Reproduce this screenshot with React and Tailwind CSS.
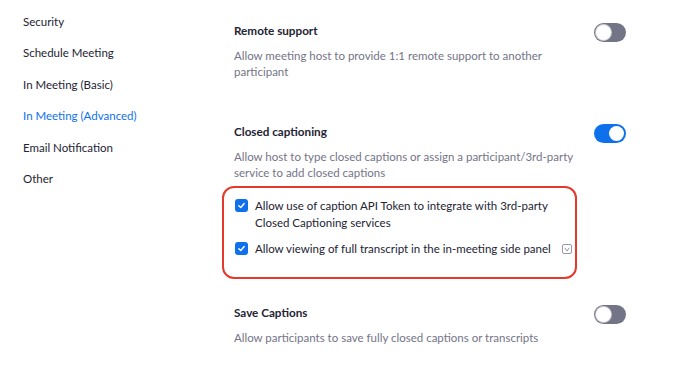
import { useState } from 'react'

const navItems = ["Security", "Schedule Meeting", "In Meeting (Basic)", "In Meeting (Advanced)", "Email Notification", "Other"]

const Toggle = ({ on }) => {
  return <div className={"w-[32px] h-[19px] rounded-full flex items-center px-[2px] " + (on ? "bg-[#0e71eb] justify-end" : "bg-[#747487] justify-start")}>
    <div className={"w-[15px] h-[15px] rounded-full bg-white " + (on ? "" : "ring-1 ring-[#c9c9d2]")}></div>
  </div>
}

const Check = () => {
  return <div className="w-[13px] h-[13px] rounded-[3px] bg-[#0e71eb] flex items-center justify-center shrink-0">
    <svg width="9" height="9" viewBox="0 0 10 10" fill="none">
      <path d="M2 5.2 L4.2 7.3 L8 2.8" stroke="white" strokeWidth="1.6" strokeLinecap="round" strokeLinejoin="round" />
    </svg>
  </div>
}

const Setting = ({ title, desc, on, children }) => {
  return <div className="flex">
    <div className="w-[360px]">
      <div className="text-[11.7px] font-bold text-[#232333] leading-[16px]">{title}</div>
      <div className="text-[11.5px] text-[#747487] leading-[16px] mt-[10px] whitespace-nowrap">{desc}</div>
      {children}
    </div>
    <div className="pt-[1px]">
      <Toggle on={on} />
    </div>
  </div>
}

export default function App() {
  const [active] = useState("In Meeting (Advanced)")

  return <div className="w-[680px] h-[379px] bg-white flex overflow-hidden" style={{ fontFamily: "Lato, 'Open Sans', sans-serif" }}>
    <div className="w-[234px] shrink-0 pl-[23px] pt-[14px] flex flex-col gap-[15.4px]">
      {navItems.map((item) => (
        <div key={item} className={"text-[11.5px] leading-[16px] " + (item === active ? "text-[#0e71eb]" : "text-[#232333]")}>{item}</div>
      ))}
    </div>
    <div className="pt-[22px] flex flex-col">
      <Setting title="Remote support" desc={<>Allow meeting host to provide 1:1 remote support to another<br />participant</>} on={false} />
      <div className="mt-[43px]">
        <Setting title="Closed captioning" desc={<>Allow host to type closed captions or assign a participant/3rd-party<br />service to add closed captions</>} on={true}>
          <div className="ml-[-12px] mt-[5px] w-[355px] border-2 border-[#e5392b] rounded-[12px] pl-[11px] pt-[9px] pb-[20px]">
            <div className="flex gap-[7px]">
              <div className="pt-[2px]"><Check /></div>
              <div className="text-[11.5px] text-[#232333] leading-[17px] whitespace-nowrap">Allow use of caption API Token to integrate with 3rd-party<br />Closed Captioning services</div>
            </div>
            <div className="flex gap-[7px] mt-[9px] items-start">
              <div className="pt-[2px]"><Check /></div>
              <div className="text-[11.5px] text-[#232333] leading-[17px] whitespace-nowrap">Allow viewing of full transcript in the in-meeting side panel</div>
              <div className="ml-[4px] mt-[4px] w-[10px] h-[10px] border border-[#9a9aa8] rounded-[2px] flex items-center justify-center">
                <svg width="6" height="5" viewBox="0 0 6 5" fill="none">
                  <path d="M0.8 0.8 L3 4 L5.2 0.8" stroke="#8a8a98" strokeWidth="0.9" />
                </svg>
              </div>
            </div>
          </div>
        </Setting>
      </div>
      <div className="mt-[25px]">
        <Setting title="Save Captions" desc="Allow participants to save fully closed captions or transcripts" on={false} />
      </div>
    </div>
  </div>
}
